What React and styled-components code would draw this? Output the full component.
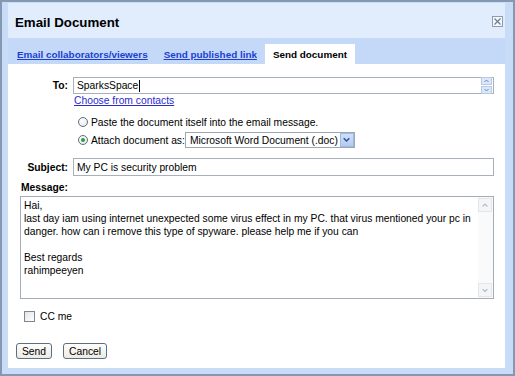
import React from 'react';
import styled, { createGlobalStyle } from 'styled-components';

const Global = createGlobalStyle`
  html, body { margin: 0; padding: 0; background: #fff; }
  body {
    font-family: "Liberation Sans", Arial, sans-serif;
    font-size: 10.3px;
    color: #000;
  }
`;

const Dialog = styled.div`
  box-sizing: border-box;
  width: 515px;
  height: 376px;
  border: 2px solid #8598b2;
  background: #c8dcf8;
  padding: 1px 8px 6px 6px;
  display: flex;
  flex-direction: column;
`;

const TitleBar = styled.div`
  height: 35px;
  flex: none;
  background: #e1edfd;
  display: flex;
  align-items: center;
  justify-content: space-between;
  padding: 3px 2px 0 7px;
  box-sizing: border-box;
`;

const Title = styled.div`
  font-weight: bold;
  font-size: 13.3px;
  color: #000;
`;

const CloseBox = styled.div`
  width: 11px;
  height: 11px;
  box-sizing: border-box;
  border: 1px solid #8e9cb0;
  background: #f5f8fc;
  display: flex;
  align-items: center;
  justify-content: center;
  margin-bottom: 1px;
`;

const TabBar = styled.div`
  height: 26px;
  flex: none;
  background: #c4d9f8;
  display: flex;
  align-items: flex-end;
  padding-left: 1px;
`;

const Tab = styled.div`
  height: 20px;
  padding: 0 8px;
  display: flex;
  align-items: center;
  font-weight: bold;
  font-size: 9.9px;
  background: ${p => (p.$active ? '#fff' : 'transparent')};
  color: ${p => (p.$active ? '#000' : '#1b3fd2')};
  text-decoration: ${p => (p.$active ? 'none' : 'underline')};
  cursor: pointer;
`;

const Content = styled.div`
  flex: 1;
  background: #fff;
  display: flex;
  flex-direction: column;
`;

const FieldRow = styled.div`
  display: grid;
  grid-template-columns: 60px 1fr;
  column-gap: 5px;
  align-items: center;
  padding-right: 11px;
  margin-top: ${p => p.$top}px;
`;

const Label = styled.div`
  font-weight: bold;
  text-align: right;
`;

const TextBox = styled.div`
  box-sizing: border-box;
  height: ${p => p.$h}px;
  border: 1px solid #a7b0bb;
  display: flex;
  align-items: center;
  padding-left: 3px;
  background: #fff;
`;

const Caret = styled.span`
  display: inline-block;
  width: 1px;
  height: 12px;
  background: #000;
  margin-left: 1px;
`;

const Grow = styled.span`
  flex: 1;
`;

const Spinner = styled.div`
  display: flex;
  flex-direction: column;
  gap: 1px;
  margin-right: 1px;
`;

const SpinBtn = styled.div`
  width: 9px;
  height: 6px;
  background: #dbe7f7;
  border: 1px solid #b8cbe6;
  display: flex;
  align-items: center;
  justify-content: center;
`;

const Link = styled.a`
  color: #2b2bd0;
  text-decoration: underline;
  margin: 1px 0 0 66px;
  line-height: 12px;
  align-self: flex-start;
  cursor: pointer;
`;

const RadioGroup = styled.div`
  margin: 8px 0 0 70px;
  display: flex;
  flex-direction: column;
  gap: 3px;
`;

const RadioRow = styled.label`
  display: flex;
  align-items: center;
  height: ${p => p.$h}px;
  gap: 3px;
`;

const Radio = styled.span`
  width: 10px;
  height: 10px;
  box-sizing: border-box;
  border-radius: 50%;
  border: 1px solid #5e6f82;
  background: radial-gradient(circle at 40% 35%, #ffffff, #dfe3e8);
  display: flex;
  align-items: center;
  justify-content: center;
  &::after {
    content: '';
    width: 4px;
    height: 4px;
    border-radius: 50%;
    background: ${p => (p.$checked ? '#2e9c3a' : 'transparent')};
  }
`;

const Select = styled.div`
  box-sizing: border-box;
  width: 170px;
  height: 16px;
  border: 1px solid #9ba8b7;
  display: flex;
  align-items: center;
  padding-left: 4px;
  margin-left: -3px;
`;

const SelectBtn = styled.div`
  width: 14px;
  height: 14px;
  box-sizing: border-box;
  background: linear-gradient(#cfe0fa, #b3caf0);
  border: 1px solid #9fb8e0;
  display: flex;
  align-items: center;
  justify-content: center;
`;

const MessageLabel = styled.div`
  font-weight: bold;
  margin: 6px 0 0 13px;
  line-height: 12px;
`;

const MessageBox = styled.div`
  box-sizing: border-box;
  height: 103px;
  margin: 2px 11px 0 12px;
  border: 1px solid #a3acb7;
  display: flex;
`;

const MessageText = styled.div`
  flex: 1;
  padding: 2px 3px;
  line-height: 13px;
  white-space: pre-wrap;
`;

const Scrollbar = styled.div`
  width: 14px;
  display: flex;
  flex-direction: column;
  justify-content: space-between;
  padding: 1px 1px 1px 0;
  background: #fafafa;
`;

const ScrollBtn = styled.div`
  height: 12px;
  border: 1px solid #e4e6e9;
  background: #f4f5f6;
  display: flex;
  align-items: center;
  justify-content: center;
`;

const CcRow = styled.label`
  display: flex;
  align-items: center;
  gap: 5px;
  margin: 11px 0 0 16px;
  height: 12px;
`;

const CheckBox = styled.span`
  width: 11px;
  height: 11px;
  box-sizing: border-box;
  border: 1px solid #7b8794;
  background: linear-gradient(135deg, #e4e4e4, #ffffff);
`;

const ButtonRow = styled.div`
  display: flex;
  gap: 11px;
  margin: 21px 0 0 8px;
`;

const Button = styled.button`
  height: 16px;
  box-sizing: border-box;
  padding: 0 5px;
  font-family: inherit;
  font-size: 10.3px;
  color: #000;
  border: 1px solid #5b6e84;
  border-radius: 3px;
  background: linear-gradient(#fefefc, #ecebe3);
  display: flex;
  align-items: center;
  cursor: pointer;
`;

const Arrow = ({ dir, color = '#6a87b8', w = 5 }) => (
  <svg width={w} height={w * 0.6 + 1} viewBox="0 0 10 6">
    {dir === 'up' ? (
      <path d="M1 5 L5 1 L9 5" fill="none" stroke={color} strokeWidth="2" />
    ) : (
      <path d="M1 1 L5 5 L9 1" fill="none" stroke={color} strokeWidth="2" />
    )}
  </svg>
);

const message = `Hai,
last day iam using internet unexpected some virus effect in my PC. that virus mentioned your pc in danger. how can i remove this type of spyware. please help me if you can

Best regards
rahimpeeyen`;

export default function App() {
  return (
    <>
      <Global />
      <Dialog>
        <TitleBar>
          <Title>Email Document</Title>
          <CloseBox>
            <svg width="7" height="7" viewBox="0 0 7 7">
              <path d="M0.5 0.5 L6.5 6.5 M6.5 0.5 L0.5 6.5" stroke="#6f7c8e" strokeWidth="1.2" />
            </svg>
          </CloseBox>
        </TitleBar>
        <TabBar>
          <Tab>Email collaborators/viewers</Tab>
          <Tab>Send published link</Tab>
          <Tab $active>Send document</Tab>
        </TabBar>
        <Content>
          <FieldRow $top={13}>
            <Label>To:</Label>
            <TextBox $h={17}>
              <span>SparksSpace</span>
              <Caret />
              <Grow />
              <Spinner>
                <SpinBtn><Arrow dir="up" w={5} /></SpinBtn>
                <SpinBtn><Arrow dir="down" w={5} /></SpinBtn>
              </Spinner>
            </TextBox>
          </FieldRow>
          <Link>Choose from contacts</Link>
          <RadioGroup>
            <RadioRow $h={14}>
              <Radio />
              <span>Paste the document itself into the email message.</span>
            </RadioRow>
            <RadioRow $h={16}>
              <Radio $checked />
              <span>Attach document as:</span>
              <Select>
                <Grow>Microsoft Word Document (.doc)</Grow>
                <SelectBtn><Arrow dir="down" color="#2d4d93" w={7} /></SelectBtn>
              </Select>
            </RadioRow>
          </RadioGroup>
          <FieldRow $top={10}>
            <Label>Subject:</Label>
            <TextBox $h={18}>My PC is security problem</TextBox>
          </FieldRow>
          <MessageLabel>Message:</MessageLabel>
          <MessageBox>
            <MessageText>{message}</MessageText>
            <Scrollbar>
              <ScrollBtn><Arrow dir="up" color="#b5bcc6" w={6} /></ScrollBtn>
              <ScrollBtn><Arrow dir="down" color="#b5bcc6" w={6} /></ScrollBtn>
            </Scrollbar>
          </MessageBox>
          <CcRow>
            <CheckBox />
            <span>CC me</span>
          </CcRow>
          <ButtonRow>
            <Button>Send</Button>
            <Button>Cancel</Button>
          </ButtonRow>
        </Content>
      </Dialog>
    </>
  );
}
